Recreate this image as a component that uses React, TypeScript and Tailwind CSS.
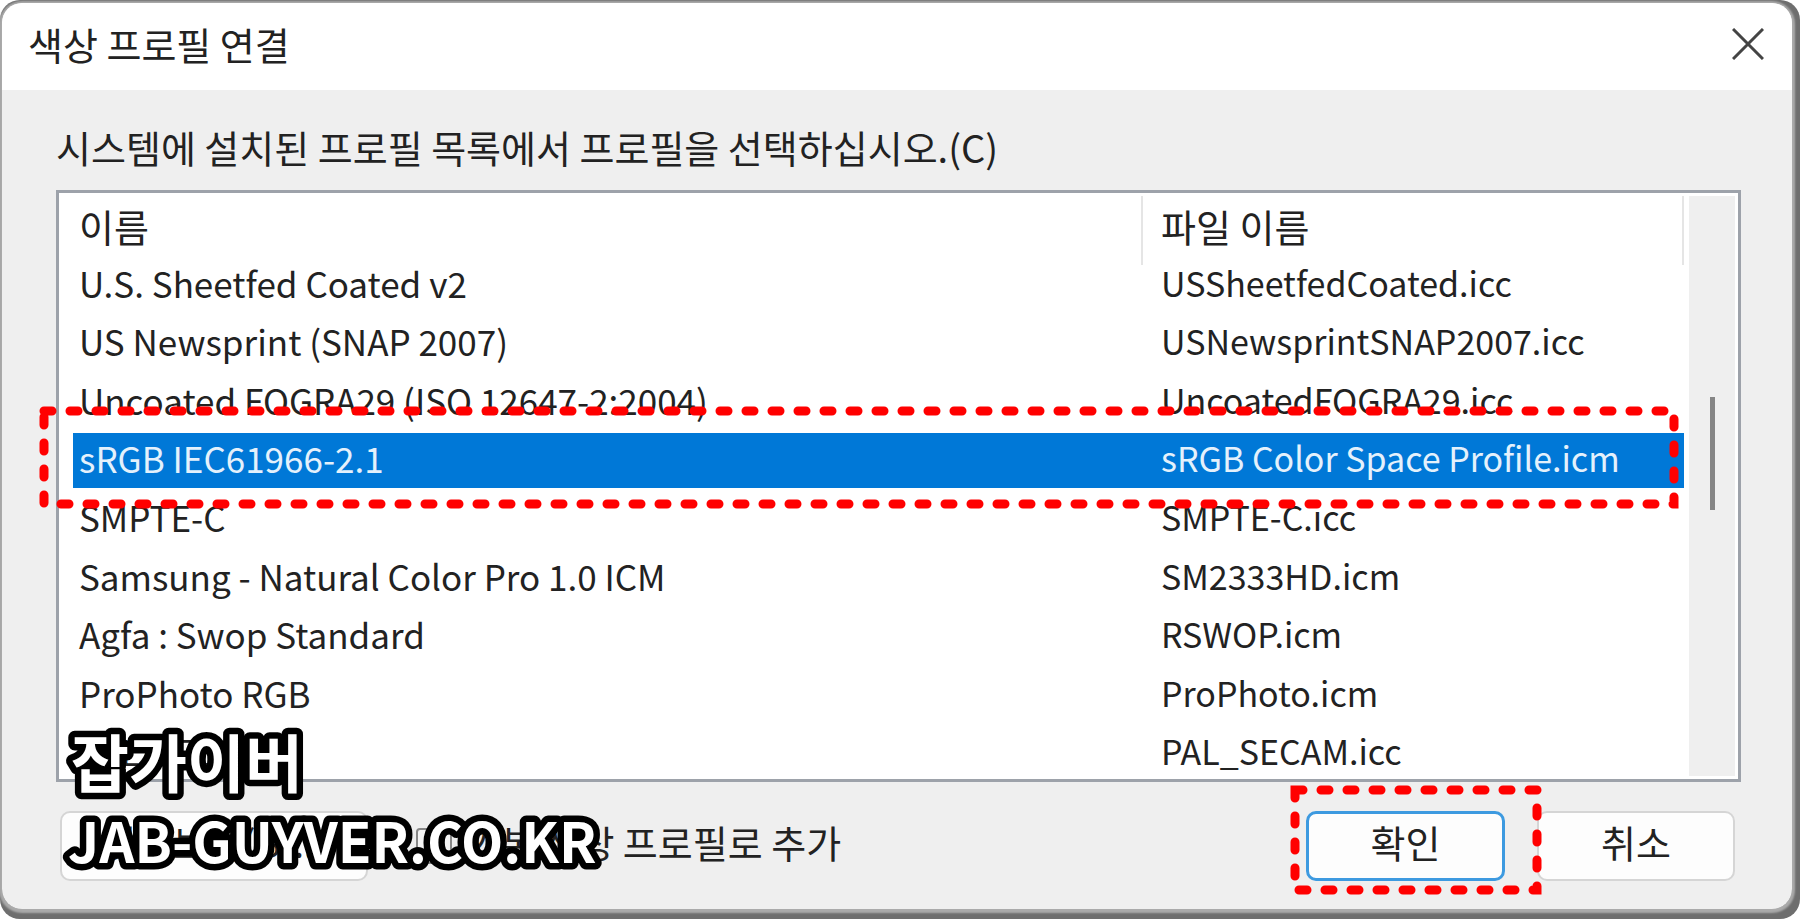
import React, { useState } from 'react';

interface Profile {
  id: number;
  name: string;
  file: string;
}

const profiles: Profile[] = [
  { id: 1, name: 'U.S. Sheetfed Coated v2', file: 'USSheetfedCoated.icc' },
  { id: 2, name: 'US Newsprint (SNAP 2007)', file: 'USNewsprintSNAP2007.icc' },
  { id: 3, name: 'Uncoated FOGRA29 (ISO 12647-2:2004)', file: 'UncoatedFOGRA29.icc' },
  { id: 4, name: 'sRGB IEC61966-2.1', file: 'sRGB Color Space Profile.icm' },
  { id: 5, name: 'SMPTE-C', file: 'SMPTE-C.icc' },
  { id: 6, name: 'Samsung - Natural Color Pro 1.0 ICM', file: 'SM2333HD.icm' },
  { id: 7, name: 'Agfa : Swop Standard', file: 'RSWOP.icm' },
  { id: 8, name: 'ProPhoto RGB', file: 'ProPhoto.icm' },
  { id: 9, name: 'PAL/SECAM', file: 'PAL_SECAM.icc' },
];

// red dotted frame laid over the part to click
function Marker({ className }: { className: string }) {
  return (
    <svg className={`absolute pointer-events-none overflow-visible ${className}`}>
      <rect
        width="100%"
        height="100%"
        fill="none"
        stroke="#ff0000"
        strokeWidth="9"
        strokeLinecap="round"
        strokeDasharray="8 18"
      />
    </svg>
  );
}

export default function App() {
  const [selected, setSelected] = useState(4);
  const [isDefault, setIsDefault] = useState(false);

  return (
    <div className="min-h-screen bg-[#6e6e6e] rounded-[20px] pt-[3px] pl-[2px] pr-2 pb-[10px] flex font-['Noto_Sans_CJK_KR',sans-serif] text-[38px] leading-[48px] text-[#222]">
      <div className="relative flex-1 flex rounded-[20px] shadow-[0_1px_2px_3px_#aaaaaa]">
        <div className="flex-1 flex flex-col rounded-[20px] bg-[#efefef] overflow-hidden">
          {/*title bar*/}
          <div className="flex items-center justify-between h-[87px] bg-white pl-[26px] pr-7 pb-[6px]">
            <h1>색상 프로필 연결</h1>
            <button type="button" aria-label="닫기">
              <svg width="32" height="32" viewBox="0 0 32 32" stroke="#444" strokeWidth="3">
                <path d="M1 1L31 31M31 1L1 31" />
              </svg>
            </button>
          </div>

          {/*body*/}
          <div className="flex-1 flex flex-col pl-[54px] pr-[51px]">
            <p className="mt-[33px]">
              시스템에 설치된 프로필 목록에서 프로필을 선택하십시오.(C)
            </p>
            <div className="mt-[19px] h-[592px] flex border-[3px] border-[#9da2aa] bg-white p-[3px] overflow-hidden">
              <div className="flex-1 pl-[11px] pr-[5px] overflow-hidden">
                <table className="w-full h-[588px] table-fixed border-separate border-spacing-0 text-left whitespace-nowrap">
                  <thead>
                    <tr className="h-[61px]">
                      <th className="relative w-[1070px] p-0 pl-[6px] pb-[2px] font-normal after:absolute after:right-0 after:top-0 after:h-[69px] after:w-[2px] after:bg-[#e5e5e5]">
                        이름
                      </th>
                      <th className="relative p-0 pl-[18px] pb-[2px] font-normal after:absolute after:right-0 after:top-0 after:h-[69px] after:w-[2px] after:bg-[#e5e5e5]">
                        파일 이름
                      </th>
                    </tr>
                  </thead>
                  <tbody>
                    {profiles.map((p) => (
                      <tr
                        key={p.id}
                        onClick={() => setSelected(p.id)}
                        className={p.id === selected ? 'bg-[#0078d7] text-[#e4f1fc]' : ''}
                      >
                        <td className="p-0 pl-[6px] pb-1 border-b-[3px] border-white text-[35px]">
                          {p.name}
                        </td>
                        <td className="p-0 pl-[18px] pb-1 border-b-[3px] border-white text-[34px]">
                          {p.file}
                        </td>
                      </tr>
                    ))}
                  </tbody>
                </table>
              </div>
              <div className="w-[46px] bg-[#efefef] flex justify-center">
                <div className="w-[5px] h-[113px] mt-[201px] bg-[#858585]"></div>
              </div>
            </div>

            {/*footer*/}
            <div className="mt-[29px] flex items-center pl-1 pr-[6px]">
              <button
                type="button"
                className="w-[308px] h-[70px] pb-2 rounded-[10px] border-2 border-[#d5d5d5] bg-[#fdfdfd]"
              >
                찾아보기(B)...
              </button>
              <input
                id="default-profile"
                type="checkbox"
                checked={isDefault}
                onChange={(e) => setIsDefault(e.target.checked)}
                className="ml-12 w-9 h-9 appearance-none rounded border-2 border-[#888] bg-[#f5f5f5]"
              />
              <label htmlFor="default-profile" className="ml-[14px] pb-2">
                기본 색상 프로필로 추가
              </label>
              <button
                type="button"
                className="ml-auto w-[199px] h-[70px] pb-2 rounded-[10px] border-[3px] border-[#3d9ae0] bg-[#fdfdfd]"
              >
                확인
              </button>
              <button
                type="button"
                className="ml-8 w-[198px] h-[70px] pb-2 rounded-[10px] border-2 border-[#d5d5d5] bg-[#fdfdfd]"
              >
                취소
              </button>
            </div>
          </div>
        </div>

        <Marker className="left-[42px] top-[408px] w-[calc(100%-160px)] h-[93px]" />
        <Marker className="right-[255px] top-[787px] w-[242px] h-[100px]" />

        {/*watermark*/}
        <svg
          className="absolute left-16 top-[720px] w-[560px] h-40 overflow-visible pointer-events-none font-bold [paint-order:stroke]"
          fill="#fff"
          stroke="#000"
          strokeWidth="13"
          strokeLinejoin="round"
        >
          <text x="5" y="64" className="text-[63px]">잡가이버</text>
          <text x="2" y="140" className="text-[55px]">JAB-GUYVER.CO.KR</text>
        </svg>
      </div>
    </div>
  );
}
